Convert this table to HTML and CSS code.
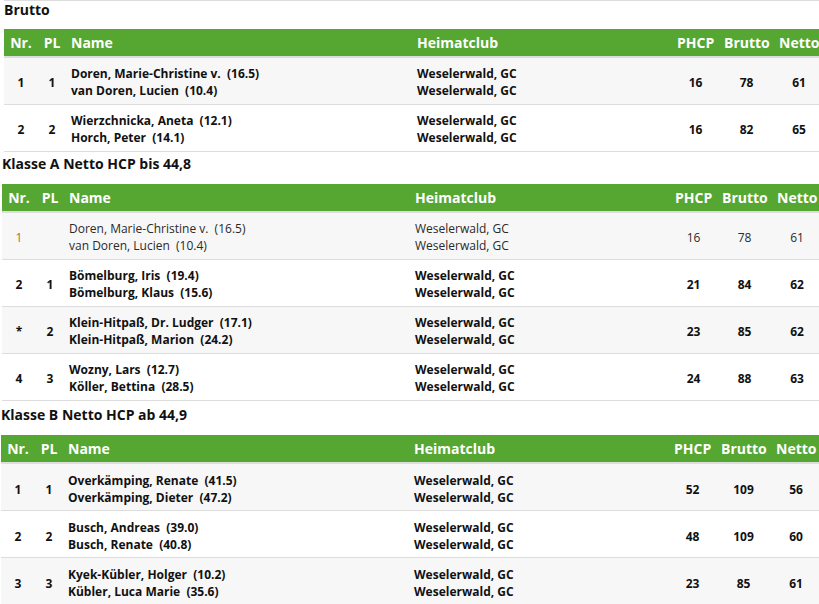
FILE: index.html
```html
<!DOCTYPE html>
<html lang="de">
<head>
<meta charset="utf-8">
<title>Ergebnisse</title>
<link rel="stylesheet" href="styles.css">
</head>
<body>
<div class="prev-end"></div>

<section class="result result--first">
  <h2 class="result__title">Brutto</h2>
  <table class="score">
    <colgroup>
      <col class="c-nr"><col class="c-pl"><col class="c-name"><col class="c-club"><col class="c-phcp"><col class="c-brutto"><col class="c-netto">
    </colgroup>
    <thead>
      <tr><th class="ctr">Nr.</th><th class="ctr">PL</th><th>Name</th><th>Heimatclub</th><th class="ctr">PHCP</th><th class="ctr">Brutto</th><th class="ctr">Netto</th></tr>
    </thead>
    <tbody>
      <tr>
        <td class="ctr">1</td><td class="ctr">1</td>
        <td>Doren, Marie-Christine v.&nbsp; (16.5)<br>van Doren, Lucien&nbsp; (10.4)</td>
        <td>Weselerwald, GC<br>Weselerwald, GC</td>
        <td class="ctr">16</td><td class="ctr">78</td><td class="ctr">61</td>
      </tr>
      <tr>
        <td class="ctr">2</td><td class="ctr">2</td>
        <td>Wierzchnicka, Aneta&nbsp; (12.1)<br>Horch, Peter&nbsp; (14.1)</td>
        <td>Weselerwald, GC<br>Weselerwald, GC</td>
        <td class="ctr">16</td><td class="ctr">82</td><td class="ctr">65</td>
      </tr>
    </tbody>
  </table>
</section>

<section class="result result--a">
  <h2 class="result__title">Klasse A Netto HCP bis 44,8</h2>
  <table class="score">
    <colgroup>
      <col class="c-nr"><col class="c-pl"><col class="c-name"><col class="c-club"><col class="c-phcp"><col class="c-brutto"><col class="c-netto">
    </colgroup>
    <thead>
      <tr><th class="ctr">Nr.</th><th class="ctr">PL</th><th>Name</th><th>Heimatclub</th><th class="ctr">PHCP</th><th class="ctr">Brutto</th><th class="ctr">Netto</th></tr>
    </thead>
    <tbody>
      <tr class="row--plain">
        <td class="ctr nr-ref">1</td><td class="ctr"></td>
        <td>Doren, Marie-Christine v.&nbsp; (16.5)<br>van Doren, Lucien&nbsp; (10.4)</td>
        <td>Weselerwald, GC<br>Weselerwald, GC</td>
        <td class="ctr">16</td><td class="ctr">78</td><td class="ctr">61</td>
      </tr>
      <tr>
        <td class="ctr">2</td><td class="ctr">1</td>
        <td>Bömelburg, Iris&nbsp; (19.4)<br>Bömelburg, Klaus&nbsp; (15.6)</td>
        <td>Weselerwald, GC<br>Weselerwald, GC</td>
        <td class="ctr">21</td><td class="ctr">84</td><td class="ctr">62</td>
      </tr>
      <tr>
        <td class="ctr">*</td><td class="ctr">2</td>
        <td>Klein-Hitpaß, Dr. Ludger&nbsp; (17.1)<br>Klein-Hitpaß, Marion&nbsp; (24.2)</td>
        <td>Weselerwald, GC<br>Weselerwald, GC</td>
        <td class="ctr">23</td><td class="ctr">85</td><td class="ctr">62</td>
      </tr>
      <tr>
        <td class="ctr">4</td><td class="ctr">3</td>
        <td>Wozny, Lars&nbsp; (12.7)<br>Köller, Bettina&nbsp; (28.5)</td>
        <td>Weselerwald, GC<br>Weselerwald, GC</td>
        <td class="ctr">24</td><td class="ctr">88</td><td class="ctr">63</td>
      </tr>
    </tbody>
  </table>
</section>

<section class="result result--b">
  <h2 class="result__title">Klasse B Netto HCP ab 44,9</h2>
  <table class="score">
    <colgroup>
      <col class="c-nr"><col class="c-pl"><col class="c-name"><col class="c-club"><col class="c-phcp"><col class="c-brutto"><col class="c-netto">
    </colgroup>
    <thead>
      <tr><th class="ctr">Nr.</th><th class="ctr">PL</th><th>Name</th><th>Heimatclub</th><th class="ctr">PHCP</th><th class="ctr">Brutto</th><th class="ctr">Netto</th></tr>
    </thead>
    <tbody>
      <tr>
        <td class="ctr">1</td><td class="ctr">1</td>
        <td>Overkämping, Renate&nbsp; (41.5)<br>Overkämping, Dieter&nbsp; (47.2)</td>
        <td>Weselerwald, GC<br>Weselerwald, GC</td>
        <td class="ctr">52</td><td class="ctr">109</td><td class="ctr">56</td>
      </tr>
      <tr>
        <td class="ctr">2</td><td class="ctr">2</td>
        <td>Busch, Andreas&nbsp; (39.0)<br>Busch, Renate&nbsp; (40.8)</td>
        <td>Weselerwald, GC<br>Weselerwald, GC</td>
        <td class="ctr">48</td><td class="ctr">109</td><td class="ctr">60</td>
      </tr>
      <tr>
        <td class="ctr">3</td><td class="ctr">3</td>
        <td>Kyek-Kübler, Holger&nbsp; (10.2)<br>Kübler, Luca Marie&nbsp; (35.6)</td>
        <td>Weselerwald, GC<br>Weselerwald, GC</td>
        <td class="ctr">23</td><td class="ctr">85</td><td class="ctr">61</td>
      </tr>
    </tbody>
  </table>
</section>
</body>
</html>
```

FILE: styles.css
```css
html, body {
  margin: 0;
  padding: 0;
  background: #ffffff;
}

body {
  overflow-x: hidden;
  font-family: "Open Sans", "DejaVu Sans", sans-serif;
  color: #111111;
}

.prev-end {
  margin-left: 4px;
  height: 0;
  border-top: 1px solid #dddddd;
}

.result--first { margin-left: 4px; }
.result--a { margin-left: 2px; }
.result--b { margin-left: 1px; }

.result__title {
  margin: 0;
  padding: 2px 0 11px;
  font-size: 14px;
  font-weight: 700;
  line-height: 19px;
  color: #111111;
}

.result--first .result__title {
  margin-top: -1px;
  padding-top: 0;
  padding-bottom: 10px;
}

.result--b .result__title {
  padding-top: 4px;
}

.score {
  border-collapse: separate;
  border-spacing: 0;
  table-layout: fixed;
  width: 820px;
}

.c-nr { width: 34px; }
.c-pl { width: 28px; }
.c-name { width: 346px; }
.c-club { width: 260px; }
.c-phcp { width: 47px; }
.c-brutto { width: 55px; }
.c-netto { width: 50px; }

.score th {
  background: #56a632;
  color: #ffffff;
  font-size: 14px;
  font-weight: 700;
  line-height: 19px;
  padding: 4px 5px;
  text-align: left;
  white-space: nowrap;
  border-bottom: 2px solid #dddddd;
}

.score td {
  font-size: 12px;
  font-weight: 700;
  line-height: 17px;
  padding: 7px 5px 5px;
  vertical-align: middle;
  white-space: nowrap;
  border-bottom: 1px solid #dddddd;
  color: #111111;
}

.result--b .score td {
  padding-top: 8px;
  padding-bottom: 4px;
}

.score tbody tr:nth-child(odd) td {
  background: #f7f7f7;
}

.score .ctr {
  text-align: center;
}

.score .row--plain td {
  font-weight: 400;
  color: #2a2a2a;
}

.score .row--plain .nr-ref {
  color: #bb6a1c;
}
```
